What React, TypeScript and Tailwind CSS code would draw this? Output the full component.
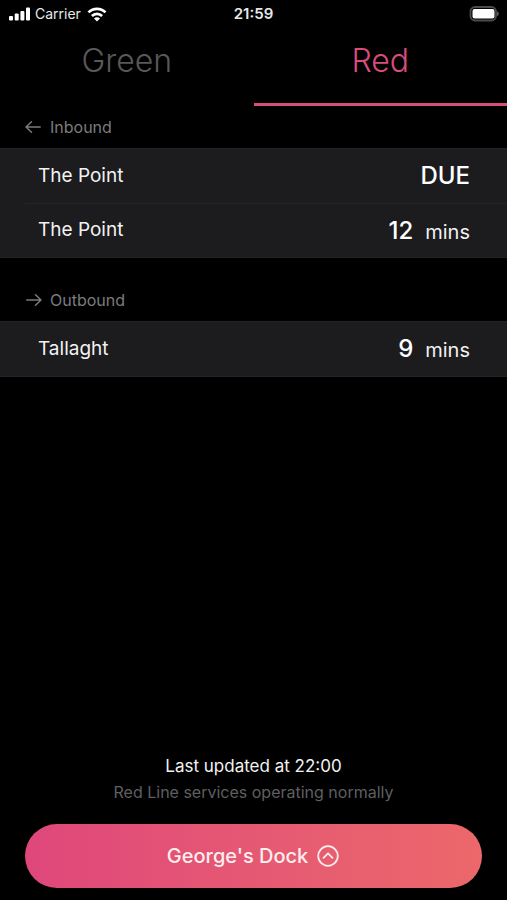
import { useState } from "react";
import { clsx } from "clsx";

interface Departure {
  destination: string;
  minutes: number;
}

interface DirectionProps {
  title: string;
  arrow: "left" | "right";
  departures: Departure[];
}

const inbound: Departure[] = [
  { destination: "The Point", minutes: 0 },
  { destination: "The Point", minutes: 12 },
];

const outbound: Departure[] = [{ destination: "Tallaght", minutes: 9 }];

function StatusBar() {
  return (
    <header className="grid h-7 grid-cols-3 items-center px-2 text-[#e8e8e8]">
      <div className="flex items-center gap-1">
        <svg width="23" height="14" viewBox="0 0 23 14" fill="#fff" aria-hidden="true">
          <rect x="1" y="9" width="4" height="4.500" rx="1" />
          <rect x="6.700" y="6.500" width="4" height="7" rx="1" />
          <rect x="12.400" y="4" width="4" height="9.500" rx="1" />
          <rect x="18" y="0.500" width="4" height="13" rx="1" />
        </svg>
        <span className="text-sm">Carrier</span>
        <svg className="ml-0.5" width="20" height="15" viewBox="0 0 20 15" fill="none" stroke="#fff" strokeWidth="2.700" aria-hidden="true">
          <path d="M1.500 5.400a12 12 0 0 1 17 0" />
          <path d="M4.900 9a7.200 7.200 0 0 1 10.200 0" />
          <path d="M10 14.500l-3-3.100a4.200 4.200 0 0 1 6 0z" fill="#fff" stroke="none" />
        </svg>
      </div>
      <time className="text-center text-[15px] font-semibold">21:59</time>
      <svg className="justify-self-end" width="30" height="16" viewBox="0 0 30 16" aria-hidden="true">
        <rect x="1.500" y="1" width="25.500" height="13.500" rx="4.500" fill="none" stroke="#4c4c4e" strokeWidth="1.800" />
        <rect x="3.500" y="3" width="22" height="9.500" rx="2" fill="#fff" />
        <path d="M28 5.300c2.400 1 2.400 4 0 5z" fill="#5c5c5e" />
      </svg>
    </header>
  );
}

function Direction({ title, arrow, departures }: DirectionProps) {
  return (
    <section>
      <h2 className="flex h-[42px] items-center gap-2 px-[25px] text-base text-[#7b7b7d]">
        <svg
          className={clsx(arrow === "right" && "-scale-x-100")}
          width="17"
          height="16"
          viewBox="0 0 17 16"
          fill="none"
          stroke="currentColor"
          strokeWidth="1.500"
          strokeLinecap="round"
          strokeLinejoin="round"
          aria-hidden="true"
        >
          <path d="M15.200 8H1M6.500 2.700L1 8l5.500 5.300" />
        </svg>
        {title}
      </h2>
      <ul className="border-y border-[#232324] bg-[#1c1c1e] text-[#f2f2f2]">
        {departures.map((item, i) => (
          <li key={i} className="pl-[25px]">
            <div
              className={clsx(
                "flex h-[54px] items-center justify-between pr-[37px] pl-[13px]",
                i > 0 && "border-t border-[#262628]"
              )}
            >
              <span className="text-[19px]">{item.destination}</span>
              {item.minutes === 0 ? (
                <span className="text-2xl font-medium text-white">DUE</span>
              ) : (
                <span className="flex items-baseline gap-3 text-xl">
                  <span className="text-2xl font-medium text-white">{item.minutes}</span>
                  mins
                </span>
              )}
            </div>
          </li>
        ))}
      </ul>
    </section>
  );
}

export default function App() {
  const [line, setLine] = useState("Red");

  return (
    <div className="flex min-h-screen flex-col bg-black font-['Inter',sans-serif]">
      <StatusBar />
      <nav className="grid grid-cols-2">
        {["Green", "Red"].map((name) => (
          <button
            key={name}
            type="button"
            aria-pressed={line === name}
            onClick={() => setLine(name)}
            className={clsx(
              "h-[78px] border-b-3 pb-2.5 text-[32px] font-light",
              line === name ? "border-[#d94c7b] text-[#d94c7b]" : "border-transparent text-[#58585a]"
            )}
          >
            {name}
          </button>
        ))}
      </nav>
      <main className="flex flex-1 flex-col gap-[21px]">
        <Direction title="Inbound" arrow="left" departures={inbound} />
        <Direction title="Outbound" arrow="right" departures={outbound} />
      </main>
      <footer className="px-[25px] pb-3 text-center">
        <p className="text-[17px] leading-7 text-[#f2f2f2]">Last updated at 22:00</p>
        <p className="text-base text-[#5f5f61]">Red Line services operating normally</p>
        <button
          type="button"
          className="mt-5 flex h-16 w-full items-center justify-center gap-2 rounded-full bg-linear-to-r from-[#df477b] to-[#ec686a] text-xl font-medium text-[#fdeeee]"
        >
          George's Dock
          <svg
            width="24"
            height="24"
            viewBox="0 0 24 24"
            fill="none"
            stroke="currentColor"
            strokeWidth="1.700"
            strokeLinecap="round"
            strokeLinejoin="round"
            aria-hidden="true"
          >
            <circle cx="12" cy="12" r="9.800" />
            <path d="M7.500 13.800L12 9.400l4.500 4.400" />
          </svg>
        </button>
      </footer>
    </div>
  );
}
